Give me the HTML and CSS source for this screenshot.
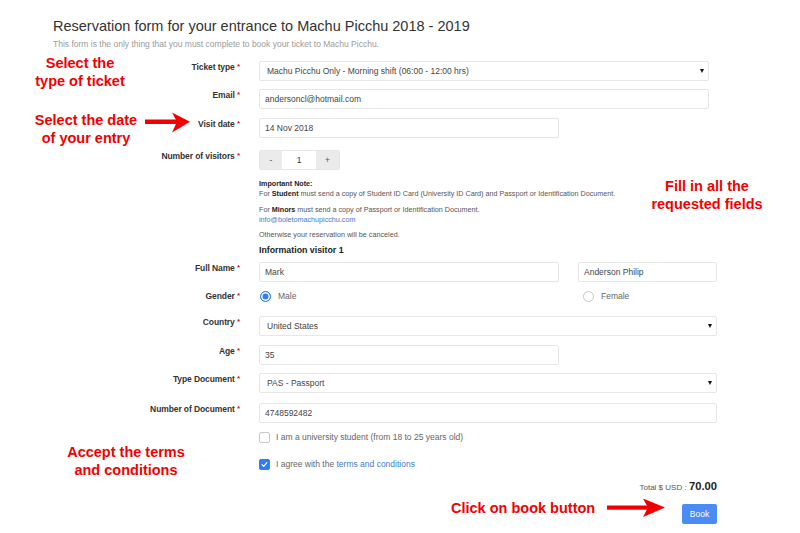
FILE: index.html
```html
<!DOCTYPE html>
<html lang="en">
  <head>
    <meta charset="UTF-8" />
    <meta name="viewport" content="width=device-width, initial-scale=1" />
    <title>Machu Picchu Reservation</title>
    <link rel="stylesheet" href="styles.css">
  </head>
  <body>
    <div class="page">
      <header class="intro">
        <h1 class="title">Reservation form for your entrance to Machu Picchu 2018 - 2019</h1>
        <p class="lead">This form is the only thing that you must complete to book your ticket to Machu Picchu.</p>
      </header>

      <form class="form">
        <div class="row">
          <label class="label" for="ticket">Ticket type <span class="req">*</span></label>
          <div class="field">
            <div class="select w-450">
              <select id="ticket">
                <option>Machu Picchu Only - Morning shift (06:00 - 12:00 hrs)</option>
              </select>
            </div>
          </div>
        </div>

        <div class="row mt-8">
          <label class="label" for="email">Email <span class="req">*</span></label>
          <div class="field">
            <input class="input w-450" id="email" type="text" value="andersoncl@hotmail.com" />
          </div>
        </div>

        <div class="row">
          <label class="label" for="visit">Visit date <span class="req">*</span></label>
          <div class="field">
            <input class="input w-300" id="visit" type="text" value="14 Nov 2018" />
          </div>
        </div>

        <div class="row mt-12">
          <label class="label">Number of visitors <span class="req">*</span></label>
          <div class="field">
            <div class="counter">
              <button type="button" class="counter-btn minus">-</button>
              <span class="counter-value">1</span>
              <button type="button" class="counter-btn plus">+</button>
            </div>
          </div>
        </div>

        <div class="row">
          <div class="field note">
            <p><b>Important Note:</b><br />For <b>Student</b> must send a copy of Student ID Card (University ID Card) and Passport or Identification Document.</p>
            <p class="note-gap">For <b>Minors</b> must send a copy of Passport or Identification Document.<br /><a href="#" class="link">info@boletomachupicchu.com</a></p>
            <p class="note-last">Otherwise your reservation will be canceled.</p>
          </div>
        </div>

        <div class="row mt-4">
          <div class="field">
            <h2 class="visitor-title">Information visitor 1</h2>
          </div>
        </div>

        <div class="row mt-6">
          <label class="label" for="name">Full Name <span class="req">*</span></label>
          <div class="field split">
            <input class="input w-300" id="name" type="text" value="Mark" />
            <input class="input w-139" type="text" value="Anderson Philip" />
          </div>
        </div>

        <div class="row mt-8 row-short">
          <label class="label">Gender <span class="req">*</span></label>
          <div class="field split">
            <span class="option w-300"><span class="radio checked"></span>Male</span>
            <span class="option"><span class="radio"></span>Female</span>
          </div>
        </div>

        <div class="row mt-14">
          <label class="label" for="country">Country <span class="req">*</span></label>
          <div class="field">
            <div class="select">
              <select id="country">
                <option>United States</option>
              </select>
            </div>
          </div>
        </div>

        <div class="row">
          <label class="label" for="age">Age <span class="req">*</span></label>
          <div class="field">
            <input class="input w-300" id="age" type="text" value="35" />
          </div>
        </div>

        <div class="row mt-8">
          <label class="label" for="doctype">Type Document <span class="req">*</span></label>
          <div class="field">
            <div class="select">
              <select id="doctype">
                <option>PAS - Passport</option>
              </select>
            </div>
          </div>
        </div>

        <div class="row mt-10">
          <label class="label" for="docnum">Number of Document <span class="req">*</span></label>
          <div class="field">
            <input class="input" id="docnum" type="text" value="4748592482" />
          </div>
        </div>

        <div class="row mt-8 row-short">
          <div class="field">
            <span class="option"><span class="check"></span>I am a university student (from 18 to 25 years old)</span>
          </div>
        </div>

        <div class="row mt-15 row-short">
          <div class="field">
            <span class="option">
              <span class="check checked">
                <svg viewBox="0 0 12 12" width="11" height="11"><path d="M2.8 6.2 L5 8.4 L9.2 3.6" fill="none" stroke="#fff" stroke-width="1.6" stroke-linecap="round" stroke-linejoin="round" /></svg>
              </span>I agree with the&nbsp;<a href="#" class="link">terms and conditions</a>
            </span>
          </div>
        </div>

        <div class="row">
          <div class="field total">
            <span class="total-label">Total $ USD :</span> <strong class="total-value">70.00</strong>
          </div>
        </div>

        <div class="row mt-9">
          <div class="field actions">
            <button type="button" class="book">Book</button>
          </div>
        </div>
      </form>

      <!-- tutorial callouts drawn over the form -->
      <div class="callout c-ticket">Select the<br />type of ticket</div>
      <div class="callout c-date">Select the date<br />of your entry</div>
      <div class="callout c-fill">Fill in all the<br />requested fields</div>
      <div class="callout c-terms">Accept the terms<br />and conditions</div>
      <div class="callout c-book">Click on book button</div>

      <svg class="arrow a-date" width="46" height="22" viewBox="0 0 46 22">
        <rect x="0" y="7.5" width="33" height="4.5" fill="#f20000" />
        <polygon points="27,0.5 45,9.8 27,20.5 32,9.8" fill="#f20000" />
      </svg>
      <svg class="arrow a-book" width="59" height="20" viewBox="0 0 59 20">
        <rect x="0" y="7.5" width="42" height="4.2" fill="#f20000" />
        <polygon points="36,0.5 58,9.5 36,19 41,9.5" fill="#f20000" />
      </svg>
    </div>
  </body>
</html>
```

FILE: styles.css
```css
* {
  margin: 0;
  padding: 0;
  box-sizing: border-box;
}
body {
  background: #fff;
  font-family: "Liberation Sans", Arial, sans-serif;
  font-size: 8.5px;
  color: #444;
}
.page {
  position: relative;
  width: 800px;
  min-height: 533px;
}
.intro {
  padding: 16px 0 0 53px;
}
.title {
  font-size: 14.5px;
  font-weight: normal;
  line-height: 20px;
  color: #333;
}
.lead {
  margin-top: 2px;
  line-height: 12px;
  color: #9a9a9a;
}
.form {
  margin-top: 11px;
  padding-left: 53px;
}
.row {
  display: grid;
  grid-template-columns: 187px 458px;
  column-gap: 19px;
  margin-top: 9px;
}
.row:first-child {
  margin-top: 0;
}
.row > .field:only-child {
  grid-column: 2;
}
.mt-4 { margin-top: 4px; }
.mt-6 { margin-top: 6px; }
.mt-8 { margin-top: 8px; }
.mt-9 { margin-top: 9px; }
.mt-10 { margin-top: 10px; }
.mt-12 { margin-top: 12px; }
.mt-14 { margin-top: 14px; }
.mt-15 { margin-top: 15px; }
.label {
  text-align: right;
  font-weight: bold;
  line-height: 12px;
  color: #333;
  letter-spacing: -0.1px;
}
.req {
  color: #e8101a;
  font-size: 8px;
  vertical-align: 1px;
}
.field {
  min-width: 0;
}
.split {
  display: flex;
  gap: 19px;
}
.input,
.select select {
  display: block;
  width: 100%;
  height: 20px;
  border: 1px solid #e6e6e6;
  border-radius: 2px;
  padding: 0 5px;
  font: inherit;
  color: #444;
  background: #fff;
  outline: none;
}
.select {
  position: relative;
}
.select select {
  appearance: none;
  -webkit-appearance: none;
  padding-left: 7px;
}
.select::after {
  content: "";
  position: absolute;
  right: 5px;
  top: 8px;
  border-left: 2.5px solid transparent;
  border-right: 2.5px solid transparent;
  border-top: 4px solid #111;
}
.w-450 { width: 450px; }
.w-300 { width: 300px; flex: none; }
.w-139 { width: 139px; }
.counter {
  display: flex;
  width: 81px;
  height: 20px;
  border: 1px solid #e6e6e6;
  border-radius: 2px;
  overflow: hidden;
}
.counter-btn {
  border: none;
  background: #ebebeb;
  font: inherit;
  color: #555;
  cursor: pointer;
}
.minus { width: 22px; }
.plus { width: 23px; }
.counter-value {
  flex: 1;
  text-align: center;
  line-height: 18px;
  color: #333;
}
.note {
  font-size: 7.2px;
  line-height: 10px;
  color: #555;
}
.note b {
  color: #222;
}
.note-gap {
  margin-top: 6px;
}
.note-last {
  margin-top: 5px;
}
.link {
  color: #3f7cc4;
  text-decoration: none;
}
.visitor-title {
  font-size: 8.8px;
  line-height: 12px;
  font-weight: bold;
  color: #222;
}
.option {
  display: flex;
  align-items: center;
  height: 12px;
  color: #666;
}
.radio {
  width: 11px;
  height: 11px;
  margin-right: 7px;
  border: 1px solid #c8c8c8;
  border-radius: 50%;
  background: #fff;
}
.split .option:first-child .radio {
  margin-left: 1px;
}
.split .option:last-child .radio {
  margin-left: 5px;
}
.radio.checked {
  border: 1.5px solid #2f7df3;
  box-shadow: inset 0 0 0 1.5px #fff;
  background: #2f7df3;
}
.check {
  display: flex;
  align-items: center;
  justify-content: center;
  width: 11px;
  height: 11px;
  margin-right: 6px;
  border: 1px solid #c8c8c8;
  border-radius: 2px;
  background: #fff;
}
.check.checked {
  border-color: #2f7df3;
  background: #2f7df3;
}
.total {
  text-align: right;
  line-height: 14px;
}
.total-label {
  font-size: 8px;
  color: #555;
}
.total-value {
  font-size: 11.2px;
  color: #222;
}
.actions {
  display: flex;
  justify-content: flex-end;
}
.book {
  width: 35px;
  height: 20px;
  border: none;
  border-radius: 2px;
  background: #4a8bf5;
  color: #fff;
  font: inherit;
  font-size: 8.5px;
  cursor: pointer;
}
.callout {
  position: absolute;
  font-size: 14.5px;
  font-weight: bold;
  line-height: 18px;
  color: #f20000;
  text-align: center;
  white-space: nowrap;
}
.c-ticket {
  left: 20px;
  top: 54px;
  width: 120px;
}
.c-date {
  left: 26px;
  top: 111px;
  width: 120px;
}
.c-fill {
  left: 647px;
  top: 177px;
  width: 120px;
}
.c-terms {
  left: 56px;
  top: 443px;
  width: 140px;
}
.c-book {
  left: 451px;
  top: 499px;
}
.arrow {
  position: absolute;
}
.a-date {
  left: 145px;
  top: 112px;
}
.a-book {
  left: 607px;
  top: 498px;
}
```
